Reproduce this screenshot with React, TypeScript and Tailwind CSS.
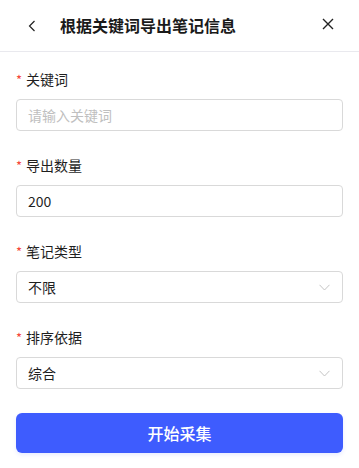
import React from 'react';

const font = { fontFamily: '"Noto Sans CJK SC", "Noto Sans", sans-serif' };

const Chevron = () => (
  <svg width="11" height="7" viewBox="0 0 11 7" fill="none" className="shrink-0">
    <path d="M0.5 0.8 L5.5 6 L10.5 0.8" stroke="#c4c4c4" strokeWidth="1" />
  </svg>
);

const Label = ({ text }: { text: string }) => (
  <div className="flex items-center h-[22px] mb-[9px] text-[14px] text-[#1f1f1f]">
    <span className="text-[#f5473b] text-[13px] mr-[4px] pt-[2px]">*</span>
    {text}
  </div>
);

export default function App() {
  return (
    <div className="w-[359px] h-[468px] bg-white rounded-tl-[10px] overflow-hidden" style={font}>
      {/* header */}
      <div className="h-[52px] flex items-center border-b border-[#e9e9ee] pl-[28px] pr-[25px]">
        <svg width="8" height="12" viewBox="0 0 8 12" fill="none">
          <path d="M6.5 1 L1.5 6 L6.5 11" stroke="#222" strokeWidth="1.2" />
        </svg>
        <div className="ml-[24px] flex-1 text-[16px] font-bold text-[#1a1a1a] leading-none -mt-[2px]">
          根据关键词导出笔记信息
        </div>
        <svg width="12" height="12" viewBox="0 0 12 12" fill="none" className="-mt-[3px]">
          <path d="M1 1 L11 11 M11 1 L1 11" stroke="#222" strokeWidth="1.4" />
        </svg>
      </div>

      {/* form */}
      <div className="px-4 pt-4">
        <div>
          <Label text="关键词" />
          <div className="h-8 border border-[#d9d9d9] rounded-[4px] px-[11px] flex items-center text-[14px] text-[#c0c0c0]">
            请输入关键词
          </div>
        </div>

        <div className="mt-[23px]">
          <Label text="导出数量" />
          <div className="h-8 border border-[#d9d9d9] rounded-[4px] px-[11px] flex items-center text-[14px] text-[#1f1f1f]">
            200
          </div>
        </div>

        <div className="mt-[23px]">
          <Label text="笔记类型" />
          <div className="h-8 border border-[#d9d9d9] rounded-[4px] pl-[11px] pr-[12px] flex items-center justify-between text-[14px] text-[#1f1f1f]">
            <span>不限</span>
            <Chevron />
          </div>
        </div>

        <div className="mt-[23px]">
          <Label text="排序依据" />
          <div className="h-8 border border-[#d9d9d9] rounded-[4px] pl-[11px] pr-[12px] flex items-center justify-between text-[14px] text-[#1f1f1f]">
            <span>综合</span>
            <Chevron />
          </div>
        </div>

        <button className="mt-[24px] w-full h-10 rounded-[6px] bg-[#3e5cfe] text-white text-[16px] font-medium flex items-center justify-center shadow-[0_2px_4px_rgba(62,92,254,0.12)]">
          开始采集
        </button>
      </div>
    </div>
  );
}
